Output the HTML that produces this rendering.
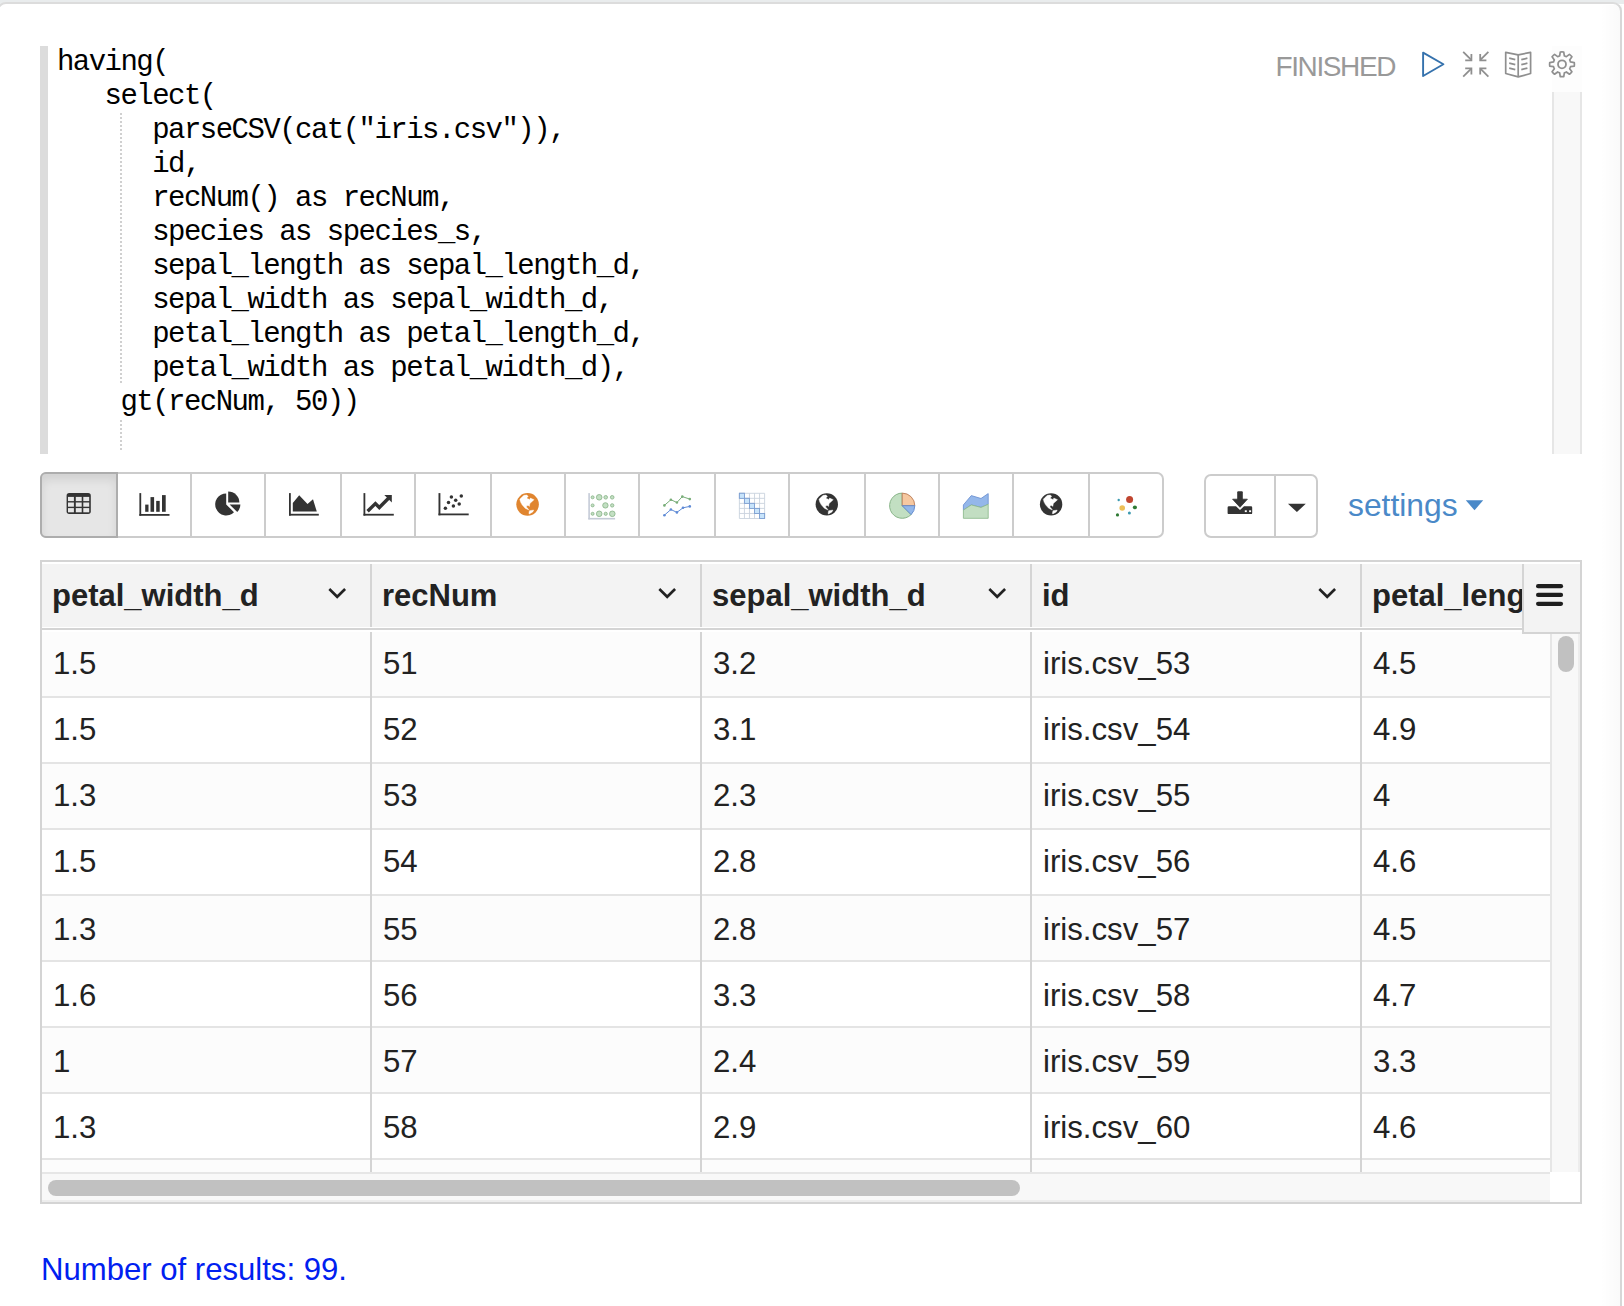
<!DOCTYPE html>
<html><head><meta charset="utf-8">
<style>
html,body{margin:0;padding:0;}
body{width:1624px;height:1306px;overflow:hidden;position:relative;background:#ffffff;font-family:"Liberation Sans",sans-serif;}
.a{position:absolute;}
#topbg{left:0;top:0;width:1624px;height:4px;background:#e9eced;}
#box{left:-3px;top:2px;width:1625px;height:1400px;border:2px solid #dcdcdc;border-radius:9px;background:#fff;box-sizing:border-box;}
#boxshade{left:1600px;top:5px;width:22px;height:1301px;background:linear-gradient(to right,rgba(0,0,0,0),rgba(0,0,0,0.022));}
#gutter{left:40px;top:46px;width:8px;height:408px;background:#dcdcdc;}
#code{left:57px;top:45.5px;font-family:"Liberation Mono",monospace;font-size:29px;letter-spacing:-1.53px;line-height:34px;color:#000;white-space:pre;}
.guide{width:2px;background:repeating-linear-gradient(to bottom,#d0d0d0 0,#d0d0d0 2px,transparent 2px,transparent 4px);}
#escroll{left:1552px;top:92px;width:30px;height:362px;background:#f8f8f8;border-left:2px solid #e6e6e6;border-right:2px solid #e6e6e6;box-sizing:border-box;}
#escrolltop{left:1552px;top:46px;width:30px;height:46px;background:#fdfdfd;}
#status{left:1275.5px;top:50px;font-size:28px;letter-spacing:-1.4px;line-height:34px;color:#999;}
#settings{left:1348px;top:485px;font-size:31.8px;line-height:40px;color:#4a89c8;}
#results{left:41px;top:1250px;font-size:31.1px;line-height:40px;color:#0020f0;}
#actbtn{left:40px;top:472px;width:78px;height:66px;box-sizing:border-box;border:2px solid #adadad;border-radius:6px 0 0 6px;background:#e6e6e6;box-shadow:inset 0 6px 10px rgba(0,0,0,0.09);}
#grid{left:40px;top:560px;width:1542px;height:644px;border:2px solid #d4d4d4;box-sizing:border-box;background:#fff;}
#hdr{left:42px;top:564px;width:1538px;height:63px;background:#f3f3f3;}
#hdrborder{left:42px;top:628px;width:1538px;height:2px;background:#d4d4d4;}
.vsep{width:2px;background:#d4d4d4;}
.hd{top:576px;font-weight:bold;font-size:31px;line-height:40px;color:#222;white-space:nowrap;}
.row{left:42px;width:1508px;}
.rowb{left:42px;width:1508px;height:2px;background:#e4e4e4;}
.cell{font-size:31.2px;line-height:40px;color:#222;white-space:nowrap;}
#menubtn{left:1522px;top:564px;width:58px;height:70px;box-sizing:border-box;border-left:2px solid #d4d4d4;border-bottom:2px solid #d4d4d4;background:#f3f3f3;overflow:hidden;}
#menubtn svg{position:absolute;left:-2px;top:0;}
#vscroll{left:1550px;top:634px;width:30px;height:538px;box-sizing:border-box;background:#f8f8f8;border-left:2px solid #e6e6e6;border-right:2px solid #ededed;}
#vthumb{left:6px;top:2px;width:16px;height:36px;border-radius:8px;background:#c1c1c1;}
#hscroll{left:42px;top:1172px;width:1508px;height:30px;box-sizing:border-box;background:#f8f8f8;border-top:2px solid #e6e6e6;border-bottom:2px solid #ededed;}
#hthumb{left:6px;top:6px;width:972px;height:16px;border-radius:8px;background:#c1c1c1;}
#corner{left:1550px;top:1172px;width:30px;height:30px;background:#fff;}

</style></head>
<body>
<div class="a" id="topbg"></div>
<div class="a" id="box"></div>
<div class="a" id="boxshade"></div>
<div class="a" id="gutter"></div>
<div class="a guide" style="left:120px;top:113px;height:270px;"></div>
<div class="a guide" style="left:120px;top:420px;height:30px;"></div>
<div class="a" id="code">having(
   select(
      parseCSV(cat("iris.csv")),
      id,
      recNum() as recNum,
      species as species_s,
      sepal_length as sepal_length_d,
      sepal_width as sepal_width_d,
      petal_length as petal_length_d,
      petal_width as petal_width_d),
    gt(recNum, 50))</div>
<div class="a" id="escrolltop"></div>
<div class="a" id="escroll"></div>
<div class="a" id="status">FINISHED</div>
<svg class="a" style="left:0;top:440px" width="1624" height="120" viewBox="0 440 1624 120">
<rect x="41" y="473" width="1122" height="64" rx="6" ry="6" fill="#fff" stroke="#cccccc" stroke-width="2"/>
<rect x="116" y="474" width="2" height="62" fill="#cccccc"/>
<rect x="190" y="474" width="2" height="62" fill="#cccccc"/>
<rect x="264" y="474" width="2" height="62" fill="#cccccc"/>
<rect x="340" y="474" width="2" height="62" fill="#cccccc"/>
<rect x="414" y="474" width="2" height="62" fill="#cccccc"/>
<rect x="490" y="474" width="2" height="62" fill="#cccccc"/>
<rect x="564" y="474" width="2" height="62" fill="#cccccc"/>
<rect x="638" y="474" width="2" height="62" fill="#cccccc"/>
<rect x="714" y="474" width="2" height="62" fill="#cccccc"/>
<rect x="788" y="474" width="2" height="62" fill="#cccccc"/>
<rect x="864" y="474" width="2" height="62" fill="#cccccc"/>
<rect x="938" y="474" width="2" height="62" fill="#cccccc"/>
<rect x="1012" y="474" width="2" height="62" fill="#cccccc"/>
<rect x="1088" y="474" width="2" height="62" fill="#cccccc"/>
</svg><div class="a" id="actbtn"></div>
<svg class="a" style="left:0;top:440px" width="1624" height="120" viewBox="0 440 1624 120">
<rect x="66.6" y="493.1" width="24.2" height="20.8" rx="2.6" fill="#333333"/>
<rect x="68.0" y="496.9" width="5.9" height="4.2" fill="#e6e6e6"/>
<rect x="68.0" y="502.5" width="5.9" height="4.2" fill="#e6e6e6"/>
<rect x="68.0" y="508.1" width="5.9" height="4.2" fill="#e6e6e6"/>
<rect x="75.8" y="496.9" width="5.9" height="4.2" fill="#e6e6e6"/>
<rect x="75.8" y="502.5" width="5.9" height="4.2" fill="#e6e6e6"/>
<rect x="75.8" y="508.1" width="5.9" height="4.2" fill="#e6e6e6"/>
<rect x="83.3" y="496.9" width="5.9" height="4.2" fill="#e6e6e6"/>
<rect x="83.3" y="502.5" width="5.9" height="4.2" fill="#e6e6e6"/>
<rect x="83.3" y="508.1" width="5.9" height="4.2" fill="#e6e6e6"/>
<rect x="139.4" y="493.1" width="1.8" height="22.7" fill="#333333"/><rect x="139.4" y="514" width="30.1" height="1.8" fill="#333333"/>
<rect x="145.2" y="504.6" width="3.3" height="7.2" fill="#333333"/>
<rect x="150.5" y="497.1" width="3.6" height="14.7" fill="#333333"/>
<rect x="156.2" y="500.9" width="3.5" height="10.9" fill="#333333"/>
<rect x="162.0" y="495.1" width="3.7" height="16.7" fill="#333333"/>
<path d="M226.2,504.4 L226.2,493.4 A11,11 0 1,0 233.98,512.18 Z" fill="#333333"/>
<path d="M228.2,502.6 L228.2,491.4 A11.2,11.2 0 0,1 239.4,502.6 Z" fill="#333333"/>
<path d="M229.6,504.4 L240.4,504.4 A10.8,10.8 0 0,1 237.24,512.04 Z" fill="#333333"/>
<rect x="289" y="493.1" width="1.8" height="22.5" fill="#333333"/><rect x="289" y="513.8" width="29.8" height="1.8" fill="#333333"/>
<path d="M292.8,503.1 L299.2,495.3 L307.5,504.1 L313,499.2 L316.8,511.6 L292.8,511.6 Z" fill="#333333"/>
<rect x="363.5" y="493.1" width="1.8" height="22.5" fill="#333333"/><rect x="363.5" y="513.8" width="30.3" height="1.8" fill="#333333"/>
<polyline points="367.6,511.2 375.4,503.6 379.3,507.5 388.5,498.3" fill="none" stroke="#333333" stroke-width="3.4" stroke-linejoin="miter"/>
<path d="M384.3,495.1 L391.8,495.1 L391.8,502.5 Z" fill="#333333"/>
<rect x="438.5" y="493.1" width="1.9" height="22.2" fill="#333333"/><rect x="438.5" y="513.5" width="30.2" height="1.8" fill="#333333"/>
<circle cx="445.4" cy="508.3" r="1.75" fill="#333333"/>
<circle cx="448.5" cy="502.5" r="1.75" fill="#333333"/>
<circle cx="451.4" cy="497.1" r="1.75" fill="#333333"/>
<circle cx="453.4" cy="506.1" r="1.75" fill="#333333"/>
<circle cx="455.7" cy="500.3" r="1.75" fill="#333333"/>
<circle cx="459.2" cy="504.1" r="1.75" fill="#333333"/>
<circle cx="461.3" cy="496.0" r="1.75" fill="#333333"/>
<circle cx="527.60" cy="504.40" r="11.30" fill="#e0852f"/><path d="M519.79,499.19 L521.47,497.51 L523.92,495.36 L526.68,495.06 L528.21,496.28 L526.99,497.82 L527.29,498.73 L528.83,499.04 L529.44,499.96 L530.36,498.12 L534.03,499.65 L531.89,501.80 L530.05,503.33 L529.59,504.86 L529.44,506.39 L528.21,505.47 L526.68,505.78 L526.37,507.00 L527.91,508.53 L528.83,509.76 L528.21,509.76 L525.15,508.23 L522.09,504.86 L520.56,502.10 Z M529.44,510.68 L533.73,510.07 L532.81,511.90 L529.44,513.89 L528.83,513.44 Z" fill="#fff" stroke="#fff" stroke-width="0.4" stroke-linejoin="round"/>
<rect x="588.3" y="493.1" width="1.6" height="26.3" fill="#c5cbd7"/><rect x="588.3" y="517.9" width="26.8" height="1.6" fill="#c5cbd7"/>
<circle cx="592.6" cy="497.3" r="1.5" fill="#c3dfc3" stroke="#86b386" stroke-width="0.8"/>
<circle cx="599.2" cy="497.3" r="2.8" fill="#c3dfc3" stroke="#86b386" stroke-width="0.8"/>
<circle cx="605.7" cy="497.3" r="1.8" fill="#c3dfc3" stroke="#86b386" stroke-width="0.8"/>
<circle cx="612.2" cy="497.3" r="1.8" fill="#c3dfc3" stroke="#86b386" stroke-width="0.8"/>
<circle cx="592.6" cy="505.4" r="1.5" fill="#c3dfc3" stroke="#86b386" stroke-width="0.8"/>
<circle cx="605.4" cy="505.4" r="2.7" fill="#c3dfc3" stroke="#86b386" stroke-width="0.8"/>
<circle cx="612.2" cy="505.4" r="1.7" fill="#c3dfc3" stroke="#86b386" stroke-width="0.8"/>
<circle cx="592.6" cy="513.8" r="1.5" fill="#c3dfc3" stroke="#86b386" stroke-width="0.8"/>
<circle cx="599.2" cy="513.8" r="2.8" fill="#c3dfc3" stroke="#86b386" stroke-width="0.8"/>
<circle cx="605.7" cy="513.8" r="1.6" fill="#c3dfc3" stroke="#86b386" stroke-width="0.8"/>
<circle cx="612.3" cy="513.8" r="2.8" fill="#c3dfc3" stroke="#86b386" stroke-width="0.8"/>
<polyline points="664.4,505.4 670.9,499.7 676.9,502.5 682.3,496.6 689.8,499.1" fill="none" stroke="#78ad78" stroke-width="1.0"/>
<circle cx="664.4" cy="505.4" r="1.3" fill="#78ad78"/>
<circle cx="670.9" cy="499.7" r="1.3" fill="#78ad78"/>
<circle cx="676.9" cy="502.5" r="1.3" fill="#78ad78"/>
<circle cx="682.3" cy="496.6" r="1.3" fill="#78ad78"/>
<circle cx="689.8" cy="499.1" r="1.3" fill="#78ad78"/>
<polyline points="664.4,515.2 670.9,509.5 676.9,512.4 683.0,507.8 689.8,506.4" fill="none" stroke="#5f8bd6" stroke-width="1.0"/>
<circle cx="664.4" cy="515.2" r="1.3" fill="#5f8bd6"/>
<circle cx="670.9" cy="509.5" r="1.3" fill="#5f8bd6"/>
<circle cx="676.9" cy="512.4" r="1.3" fill="#5f8bd6"/>
<circle cx="683.0" cy="507.8" r="1.3" fill="#5f8bd6"/>
<circle cx="689.8" cy="506.4" r="1.3" fill="#5f8bd6"/>
<rect x="739.40" y="493.30" width="5.04" height="5.04" fill="#c8e4fb" stroke="#7d9fd2" stroke-width="0.9"/>
<rect x="744.44" y="498.34" width="5.04" height="5.04" fill="#c8e4fb" stroke="#7d9fd2" stroke-width="0.9"/>
<rect x="749.48" y="503.38" width="5.04" height="5.04" fill="#c8e4fb" stroke="#7d9fd2" stroke-width="0.9"/>
<rect x="754.52" y="508.42" width="5.04" height="5.04" fill="#c8e4fb" stroke="#7d9fd2" stroke-width="0.9"/>
<rect x="759.56" y="513.46" width="5.04" height="5.04" fill="#c8e4fb" stroke="#7d9fd2" stroke-width="0.9"/>
<line x1="739.40" y1="493.30" x2="739.40" y2="518.50" stroke="#c9d2de" stroke-width="0.9"/>
<line x1="739.40" y1="493.30" x2="764.60" y2="493.30" stroke="#c9d2de" stroke-width="0.9"/>
<line x1="744.44" y1="493.30" x2="744.44" y2="518.50" stroke="#c9d2de" stroke-width="0.9"/>
<line x1="739.40" y1="498.34" x2="764.60" y2="498.34" stroke="#c9d2de" stroke-width="0.9"/>
<line x1="749.48" y1="493.30" x2="749.48" y2="518.50" stroke="#c9d2de" stroke-width="0.9"/>
<line x1="739.40" y1="503.38" x2="764.60" y2="503.38" stroke="#c9d2de" stroke-width="0.9"/>
<line x1="754.52" y1="493.30" x2="754.52" y2="518.50" stroke="#c9d2de" stroke-width="0.9"/>
<line x1="739.40" y1="508.42" x2="764.60" y2="508.42" stroke="#c9d2de" stroke-width="0.9"/>
<line x1="759.56" y1="493.30" x2="759.56" y2="518.50" stroke="#c9d2de" stroke-width="0.9"/>
<line x1="739.40" y1="513.46" x2="764.60" y2="513.46" stroke="#c9d2de" stroke-width="0.9"/>
<line x1="764.60" y1="493.30" x2="764.60" y2="518.50" stroke="#c9d2de" stroke-width="0.9"/>
<line x1="739.40" y1="518.50" x2="764.60" y2="518.50" stroke="#c9d2de" stroke-width="0.9"/>
<rect x="739.40" y="493.30" width="5.04" height="5.04" fill="#c8e4fb" stroke="#7d9fd2" stroke-width="0.9"/>
<rect x="744.44" y="498.34" width="5.04" height="5.04" fill="#c8e4fb" stroke="#7d9fd2" stroke-width="0.9"/>
<rect x="749.48" y="503.38" width="5.04" height="5.04" fill="#c8e4fb" stroke="#7d9fd2" stroke-width="0.9"/>
<rect x="754.52" y="508.42" width="5.04" height="5.04" fill="#c8e4fb" stroke="#7d9fd2" stroke-width="0.9"/>
<rect x="759.56" y="513.46" width="5.04" height="5.04" fill="#c8e4fb" stroke="#7d9fd2" stroke-width="0.9"/>
<circle cx="826.80" cy="504.40" r="11.20" fill="#333333"/><path d="M818.99,499.19 L820.67,497.51 L823.12,495.36 L825.88,495.06 L827.41,496.28 L826.19,497.82 L826.49,498.73 L828.03,499.04 L828.64,499.96 L829.56,498.12 L833.23,499.65 L831.09,501.80 L829.25,503.33 L828.79,504.86 L828.64,506.39 L827.41,505.47 L825.88,505.78 L825.57,507.00 L827.11,508.53 L828.03,509.76 L827.41,509.76 L824.35,508.23 L821.29,504.86 L819.76,502.10 Z M828.64,510.68 L832.93,510.07 L832.01,511.90 L828.64,513.89 L828.03,513.44 Z" fill="#fff" stroke="#fff" stroke-width="0.4" stroke-linejoin="round"/>
<path d="M902.20,505.70 L902.20,493.10 A12.60,12.60 0 1,0 911.11,514.61 Z" fill="#c2dfc2" stroke="#7fae7f" stroke-width="0.9"/>
<path d="M902.20,505.70 L902.20,493.10 A12.60,12.60 0 0,1 914.80,505.70 Z" fill="#f6c8a0" stroke="#b97c58" stroke-width="0.9"/>
<path d="M902.20,505.70 L914.80,505.70 A12.60,12.60 0 0,1 911.11,514.61 Z" fill="#92b6e9" stroke="#5f88cc" stroke-width="0.9"/>
<path d="M963.4,504.9 L971.3,495.6 L981,498.5 L988.2,493.6 L988.2,504.3 L981,507.4 L971.3,504.9 L963.4,510.1 Z" fill="#94b7ea" stroke="#6f93d2" stroke-width="0.9" stroke-linejoin="round"/>
<path d="M963.4,510.1 L971.3,504.9 L981,507.4 L988.2,504.3 L988.2,518.3 L963.4,518.3 Z" fill="#c2dec2" stroke="#8ebb8e" stroke-width="0.9" stroke-linejoin="round"/>
<circle cx="1051.10" cy="504.40" r="11.20" fill="#333333"/><path d="M1043.29,499.19 L1044.97,497.51 L1047.42,495.36 L1050.18,495.06 L1051.71,496.28 L1050.49,497.82 L1050.79,498.73 L1052.33,499.04 L1052.94,499.96 L1053.86,498.12 L1057.53,499.65 L1055.39,501.80 L1053.55,503.33 L1053.09,504.86 L1052.94,506.39 L1051.71,505.47 L1050.18,505.78 L1049.87,507.00 L1051.41,508.53 L1052.33,509.76 L1051.71,509.76 L1048.65,508.23 L1045.59,504.86 L1044.06,502.10 Z M1052.94,510.68 L1057.23,510.07 L1056.31,511.90 L1052.94,513.89 L1052.33,513.44 Z" fill="#fff" stroke="#fff" stroke-width="0.4" stroke-linejoin="round"/>
<circle cx="1129.6" cy="499.4" r="3.5" fill="#c0452f"/>
<circle cx="1118.7" cy="500.0" r="1.2" fill="#3c9ab0"/>
<circle cx="1122.2" cy="508.0" r="2.8" fill="#ecbf57"/>
<circle cx="1129.4" cy="512.9" r="1.5" fill="#3c9ab0"/>
<circle cx="1117.5" cy="514.9" r="1.6" fill="#2e7a34"/>
<ellipse cx="1134.9" cy="507.4" rx="2.1" ry="1.8" fill="#2e7a34"/>
<rect x="1205" y="475" width="112" height="62" rx="6" ry="6" fill="#fff" stroke="#cccccc" stroke-width="2"/>
<rect x="1274" y="476" width="2" height="60" fill="#cccccc"/>
<rect x="1237.2" y="491.3" width="5.6" height="9" rx="1" fill="#333333"/>
<path d="M1232.6,499.2 L1247.4,499.2 L1240,507.3 Z" fill="#333333" stroke="#333333" stroke-width="0.8" stroke-linejoin="round"/>
<path d="M1229,506.2 L1236,506.2 L1240,510 L1244,506.2 L1251,506.2 Q1252.2,506.2 1252.2,507.4 L1252.2,512.9 Q1252.2,514.1 1251,514.1 L1228.8,514.1 Q1227.6,514.1 1227.6,512.9 L1227.6,507.4 Q1227.6,506.2 1229,506.2 Z" fill="#333333"/>
<rect x="1244.8" y="510.3" width="2" height="1.8" fill="#fff"/><rect x="1249.1" y="510.3" width="2" height="1.8" fill="#fff"/>
<path d="M1288,503.8 L1305.8,503.8 L1296.9,512.1 Z" fill="#333333"/>
<path d="M1465.8,500.2 L1483.2,500.2 L1474.5,510.3 Z" fill="#4a89c8"/>
</svg><svg class="a" style="left:1400px;top:40px" width="200" height="50" viewBox="1400 40 200 50">
<path d="M1423.1,52.6 L1443.4,64.3 L1423.1,76.0 Z" fill="none" stroke="#3572ad" stroke-width="1.9" stroke-linejoin="round"/>
<g fill="none" stroke="#8f8f8f" stroke-width="1.8">
<line x1="1463.2" y1="51.8" x2="1471" y2="59.6"/><polyline points="1471.4,53.9 1471.4,60.4 1465.2,60.4"/>
<line x1="1488.4" y1="51.8" x2="1480.6" y2="59.6"/><polyline points="1480.2,53.9 1480.2,60.4 1486.4,60.4"/>
<line x1="1463.2" y1="76.6" x2="1471" y2="68.8"/><polyline points="1465.2,68.4 1471.4,68.4 1471.4,74.6"/>
<line x1="1488.4" y1="76.6" x2="1480.6" y2="68.8"/><polyline points="1486.4,68.4 1480.2,68.4 1480.2,74.6"/>
</g>
<g fill="none" stroke="#8f8f8f" stroke-width="1.7" stroke-linejoin="round">
<path d="M1505.7,52.3 L1518.2,54.9 L1530.6,52.3 L1530.6,73.5 L1518.2,76.9 L1505.7,73.5 Z"/><line x1="1518.2" y1="54.9" x2="1518.2" y2="76.9"/>
<line x1="1509.2" y1="58.2" x2="1515.3" y2="59.7"/>
<line x1="1521.3" y1="59.7" x2="1527.4" y2="58.2"/>
<line x1="1509.2" y1="63.2" x2="1515.3" y2="64.7"/>
<line x1="1521.3" y1="64.7" x2="1527.4" y2="63.2"/>
<line x1="1509.2" y1="68.1" x2="1515.3" y2="69.6"/>
<line x1="1521.3" y1="69.6" x2="1527.4" y2="68.1"/>
</g>
<path d="M1559.66,55.82 L1560.25,52.02 A12.40,12.40 0 0,1 1563.75,52.02 L1564.34,55.82 A8.80,8.80 0 0,1 1566.35,56.65 L1569.45,54.38 A12.40,12.40 0 0,1 1571.92,56.85 L1569.65,59.95 A8.80,8.80 0 0,1 1570.48,61.96 L1574.28,62.55 A12.40,12.40 0 0,1 1574.28,66.05 L1570.48,66.64 A8.80,8.80 0 0,1 1569.65,68.65 L1571.92,71.75 A12.40,12.40 0 0,1 1569.45,74.22 L1566.35,71.95 A8.80,8.80 0 0,1 1564.34,72.78 L1563.75,76.58 A12.40,12.40 0 0,1 1560.25,76.58 L1559.66,72.78 A8.80,8.80 0 0,1 1557.65,71.95 L1554.55,74.22 A12.40,12.40 0 0,1 1552.08,71.75 L1554.35,68.65 A8.80,8.80 0 0,1 1553.52,66.64 L1549.72,66.05 A12.40,12.40 0 0,1 1549.72,62.55 L1553.52,61.96 A8.80,8.80 0 0,1 1554.35,59.95 L1552.08,56.85 A12.40,12.40 0 0,1 1554.55,54.38 L1557.65,56.65 A8.80,8.80 0 0,1 1559.66,55.82 Z" fill="none" stroke="#8f8f8f" stroke-width="1.7" stroke-linejoin="round"/>
<circle cx="1562" cy="64.3" r="4.0" fill="none" stroke="#8f8f8f" stroke-width="1.8"/>
</svg><div class="a" id="grid"></div>
<div class="a" id="hdr"></div>
<div class="a vsep" style="left:370px;top:564px;height:63px"></div>
<div class="a vsep" style="left:700px;top:564px;height:63px"></div>
<div class="a vsep" style="left:1030px;top:564px;height:63px"></div>
<div class="a vsep" style="left:1360px;top:564px;height:63px"></div>
<div class="a hd" style="left:52px">petal_width_d</div>
<svg class="a" style="left:328px;top:586px" width="20" height="16" viewBox="0 0 20 16"><polyline points="1.3,3.0 9.2,10.8 17.1,3.0" fill="none" stroke="#222" stroke-width="2.6"/></svg>
<div class="a hd" style="left:382px">recNum</div>
<svg class="a" style="left:658px;top:586px" width="20" height="16" viewBox="0 0 20 16"><polyline points="1.3,3.0 9.2,10.8 17.1,3.0" fill="none" stroke="#222" stroke-width="2.6"/></svg>
<div class="a hd" style="left:712px">sepal_width_d</div>
<svg class="a" style="left:988px;top:586px" width="20" height="16" viewBox="0 0 20 16"><polyline points="1.3,3.0 9.2,10.8 17.1,3.0" fill="none" stroke="#222" stroke-width="2.6"/></svg>
<div class="a hd" style="left:1042px">id</div>
<svg class="a" style="left:1318px;top:586px" width="20" height="16" viewBox="0 0 20 16"><polyline points="1.3,3.0 9.2,10.8 17.1,3.0" fill="none" stroke="#222" stroke-width="2.6"/></svg>
<div class="a hd" style="left:1372px">petal_leng</div>
<div class="a" id="hdrborder"></div>
<div class="a row" style="top:632px;height:64px;background:#fcfcfc"></div>
<div class="a rowb" style="top:696px"></div>
<div class="a cell" style="left:53px;top:644px">1.5</div>
<div class="a cell" style="left:383px;top:644px">51</div>
<div class="a cell" style="left:713px;top:644px">3.2</div>
<div class="a cell" style="left:1043px;top:644px">iris.csv_53</div>
<div class="a cell" style="left:1373px;top:644px">4.5</div>
<div class="a row" style="top:698px;height:64px;background:#ffffff"></div>
<div class="a rowb" style="top:762px"></div>
<div class="a cell" style="left:53px;top:710px">1.5</div>
<div class="a cell" style="left:383px;top:710px">52</div>
<div class="a cell" style="left:713px;top:710px">3.1</div>
<div class="a cell" style="left:1043px;top:710px">iris.csv_54</div>
<div class="a cell" style="left:1373px;top:710px">4.9</div>
<div class="a row" style="top:764px;height:64px;background:#fcfcfc"></div>
<div class="a rowb" style="top:828px"></div>
<div class="a cell" style="left:53px;top:776px">1.3</div>
<div class="a cell" style="left:383px;top:776px">53</div>
<div class="a cell" style="left:713px;top:776px">2.3</div>
<div class="a cell" style="left:1043px;top:776px">iris.csv_55</div>
<div class="a cell" style="left:1373px;top:776px">4</div>
<div class="a row" style="top:830px;height:64px;background:#ffffff"></div>
<div class="a rowb" style="top:894px"></div>
<div class="a cell" style="left:53px;top:842px">1.5</div>
<div class="a cell" style="left:383px;top:842px">54</div>
<div class="a cell" style="left:713px;top:842px">2.8</div>
<div class="a cell" style="left:1043px;top:842px">iris.csv_56</div>
<div class="a cell" style="left:1373px;top:842px">4.6</div>
<div class="a row" style="top:896px;height:64px;background:#fcfcfc"></div>
<div class="a rowb" style="top:960px"></div>
<div class="a cell" style="left:53px;top:910px">1.3</div>
<div class="a cell" style="left:383px;top:910px">55</div>
<div class="a cell" style="left:713px;top:910px">2.8</div>
<div class="a cell" style="left:1043px;top:910px">iris.csv_57</div>
<div class="a cell" style="left:1373px;top:910px">4.5</div>
<div class="a row" style="top:962px;height:64px;background:#ffffff"></div>
<div class="a rowb" style="top:1026px"></div>
<div class="a cell" style="left:53px;top:976px">1.6</div>
<div class="a cell" style="left:383px;top:976px">56</div>
<div class="a cell" style="left:713px;top:976px">3.3</div>
<div class="a cell" style="left:1043px;top:976px">iris.csv_58</div>
<div class="a cell" style="left:1373px;top:976px">4.7</div>
<div class="a row" style="top:1028px;height:64px;background:#fcfcfc"></div>
<div class="a rowb" style="top:1092px"></div>
<div class="a cell" style="left:53px;top:1042px">1</div>
<div class="a cell" style="left:383px;top:1042px">57</div>
<div class="a cell" style="left:713px;top:1042px">2.4</div>
<div class="a cell" style="left:1043px;top:1042px">iris.csv_59</div>
<div class="a cell" style="left:1373px;top:1042px">3.3</div>
<div class="a row" style="top:1094px;height:64px;background:#ffffff"></div>
<div class="a rowb" style="top:1158px"></div>
<div class="a cell" style="left:53px;top:1108px">1.3</div>
<div class="a cell" style="left:383px;top:1108px">58</div>
<div class="a cell" style="left:713px;top:1108px">2.9</div>
<div class="a cell" style="left:1043px;top:1108px">iris.csv_60</div>
<div class="a cell" style="left:1373px;top:1108px">4.6</div>
<div class="a row" style="top:1160px;height:12px;background:#fcfcfc"></div>
<div class="a rowb" style="top:1172px"></div>
<div class="a vsep" style="left:370px;top:632px;height:540px"></div>
<div class="a vsep" style="left:700px;top:632px;height:540px"></div>
<div class="a vsep" style="left:1030px;top:632px;height:540px"></div>
<div class="a vsep" style="left:1360px;top:632px;height:540px"></div>
<div class="a" id="menubtn"><svg width="58" height="70" viewBox="1522 564 58 70"><g stroke="#1e1e1e" stroke-width="4.2" stroke-linecap="round"><line x1="1538.1" y1="586.2" x2="1561" y2="586.2"/><line x1="1538.1" y1="594.9" x2="1561" y2="594.9"/><line x1="1538.1" y1="603.8" x2="1561" y2="603.8"/></g></svg></div>
<div class="a" id="vscroll"><div class="a" id="vthumb"></div></div>
<div class="a" id="hscroll"><div class="a" id="hthumb"></div></div>
<div class="a" id="corner"></div><div class="a" id="settings">settings</div>
<div class="a" id="results">Number of results: 99.</div>
</body></html>
